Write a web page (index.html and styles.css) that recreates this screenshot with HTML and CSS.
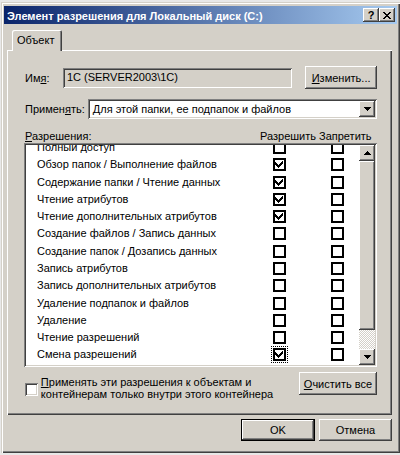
FILE: index.html
```html
<!DOCTYPE html>
<html lang="ru">
<head>
<meta charset="utf-8">
<link rel="stylesheet" href="styles.css">
</head>
<body>
<div class="window">
  <div class="titlebar">
    <span class="title">Элемент разрешения для Локальный диск (C:)</span>
    <div class="tbtns">
      <div class="tbtn raised"><span class="q">?</span></div>
      <div class="tbtn raised">
        <svg width="8" height="7" viewBox="0 0 8 7" shape-rendering="crispEdges"><path d="M0 0h2v1h1v1h2v-1h1v-1h2v1h-1v1h-1v1h-1v1h1v1h1v1h1v1h-2v-1h-1v-1h-2v1h-1v1h-2v-1h1v-1h1v-1h1v-1h-1v-1h-1v-1h-1z" fill="#000"/></svg>
      </div>
    </div>
  </div>
  <div class="client">
    <div class="tabs">
      <div class="tab">Объект</div>
    </div>
    <div class="panel">
      <div class="row-name">
        <span class="lbl lbl-name">Им<u>я</u>:</span>
        <div class="field sunken">1C (SERVER2003\1C)</div>
        <div class="btn raised btn-change"><span><u>И</u>зменить...</span></div>
      </div>
      <div class="row-apply">
        <span class="lbl lbl-apply">Примен<u>я</u>ть:</span>
        <div class="combo sunken">
          <span class="combo-text">Для этой папки, ее подпапок и файлов</span>
          <div class="drop raised">
            <svg width="7" height="4" viewBox="0 0 7 4" shape-rendering="crispEdges"><path d="M0 0h7v1h-1v1h-1v1h-1v1h-1v-1h-1v-1h-1v-1h-1z" fill="#000"/></svg>
          </div>
        </div>
      </div>
      <div class="row-head">
        <span class="lbl"><u>Р</u>азрешения:</span>
        <span class="col-allow">Разрешить</span>
        <span class="col-deny">Запретить</span>
      </div>
      <div class="list sunken">
        <div class="list-rows">
          <div class="rows">
            <div class="prow"><span>Полный доступ</span><i class="cb"></i><i class="cb"></i></div>
            <div class="prow"><span>Обзор папок / Выполнение файлов</span><i class="cb on"></i><i class="cb"></i></div>
            <div class="prow"><span>Содержание папки / Чтение данных</span><i class="cb on"></i><i class="cb"></i></div>
            <div class="prow"><span>Чтение атрибутов</span><i class="cb on"></i><i class="cb"></i></div>
            <div class="prow"><span>Чтение дополнительных атрибутов</span><i class="cb on"></i><i class="cb"></i></div>
            <div class="prow"><span>Создание файлов / Запись данных</span><i class="cb"></i><i class="cb"></i></div>
            <div class="prow"><span>Создание папок / Дозапись данных</span><i class="cb"></i><i class="cb"></i></div>
            <div class="prow"><span>Запись атрибутов</span><i class="cb"></i><i class="cb"></i></div>
            <div class="prow"><span>Запись дополнительных атрибутов</span><i class="cb"></i><i class="cb"></i></div>
            <div class="prow"><span>Удаление подпапок и файлов</span><i class="cb"></i><i class="cb"></i></div>
            <div class="prow"><span>Удаление</span><i class="cb"></i><i class="cb"></i></div>
            <div class="prow"><span>Чтение разрешений</span><i class="cb"></i><i class="cb"></i></div>
            <div class="prow"><span>Смена разрешений</span><i class="cb on focus"></i><i class="cb"></i></div>
          </div>
        </div>
        <div class="scrollbar">
          <div class="sb-btn raised">
            <svg width="7" height="4" viewBox="0 0 7 4" shape-rendering="crispEdges"><path d="M3 0h1v1h1v1h1v1h1v1h-7v-1h1v-1h1v-1h1z" fill="#000"/></svg>
          </div>
          <div class="sb-thumb raised"></div>
          <div class="sb-track"></div>
          <div class="sb-btn raised">
            <svg width="7" height="4" viewBox="0 0 7 4" shape-rendering="crispEdges"><path d="M0 0h7v1h-1v1h-1v1h-1v1h-1v-1h-1v-1h-1v-1h-1z" fill="#000"/></svg>
          </div>
        </div>
      </div>
      <div class="row-bottom">
        <i class="chk sunken"></i>
        <div class="chk-text"><u>П</u>рименять эти разрешения к объектам и<br>контейнерам только внутри этого контейнера</div>
        <div class="btn raised btn-clear"><span><u>О</u>чистить все</span></div>
      </div>
    </div>
    <div class="footer">
      <div class="btn btn-default btn-ok"><span>OK</span></div>
      <div class="btn raised btn-cancel"><span>Отмена</span></div>
    </div>
  </div>
</div>
</body>
</html>
```

FILE: styles.css
```css
* { box-sizing: border-box; }
html, body {
  margin: 0;
  padding: 0;
}
body {
  width: 400px;
  height: 455px;
  overflow: hidden;
  background: #e8e8e8;
  font-family: "Liberation Sans", Arial, sans-serif;
  font-size: 11px;
  color: #000;
}
u { text-decoration: underline; text-underline-offset: 1px; }

.raised {
  background: #d4d0c8;
  box-shadow: inset -1px -1px #404040, inset 1px 1px #fff, inset -2px -2px #808080, inset 2px 2px #d4d0c8;
}
.sunken {
  box-shadow: inset 1px 1px #808080, inset -1px -1px #fff, inset 2px 2px #404040, inset -2px -2px #d4d0c8;
}

.window {
  margin: 2px 0 0 1px;
  width: 399px;
  height: 451px;
  padding: 4px 3px 3px 3px;
  background: #d4d0c8;
  box-shadow: inset 1px 1px #d4d0c8, inset 2px 2px #fff, inset -1px -1px #404040, inset -2px -2px #808080;
  display: flex;
  flex-direction: column;
}

.titlebar {
  height: 18px;
  display: flex;
  align-items: center;
  justify-content: space-between;
  padding: 0 2px 0 3px;
  background: linear-gradient(to right, #0a246a, #a6caf0);
}
.title {
  color: #fff;
  font-weight: bold;
  font-size: 11px;
  white-space: nowrap;
  padding-top: 1px;
}
.tbtns { display: flex; }
.tbtn {
  width: 16px;
  height: 14px;
  display: flex;
  align-items: center;
  justify-content: center;
}
.q {
  font-weight: bold;
  font-size: 11px;
  line-height: 1;
  margin-top: 1px;
}

.client {
  flex: 1;
  display: flex;
  flex-direction: column;
  padding: 6px 5px 0 3px;
}

.tabs {
  display: flex;
  height: 20px;
  padding-left: 5px;
  position: relative;
  z-index: 1;
}
.tab {
  width: 50px;
  height: 21px;
  padding: 4px 0 0 5px;
  background: #d4d0c8;
  border-radius: 2px 2px 0 0;
  box-shadow: inset 1px 1px #fff, inset -1px 0 #404040, inset -2px 0 #808080;
}

.panel {
  height: 365px;
  padding: 16px 15px 0 17px;
  box-shadow: inset 1px 1px #fff, inset -1px -1px #404040, inset -2px -2px #808080;
  display: flex;
  flex-direction: column;
}

.lbl { padding-left: 1px; white-space: nowrap; }

.row-name {
  display: flex;
  align-items: center;
  height: 23px;
}
.lbl-name { width: 39px; }
.field {
  width: 230px;
  height: 20px;
  background: #d4d0c8;
  padding: 3px 0 0 4px;
  white-space: nowrap;
}
.btn {
  height: 23px;
  display: flex;
  align-items: center;
  justify-content: center;
  white-space: nowrap;
}
.btn-change { width: 72px; margin-left: 13px; }

.row-apply {
  display: flex;
  align-items: center;
  margin-top: 10px;
  height: 20px;
}
.lbl-apply { width: 64px; }
.combo {
  width: 290px;
  height: 20px;
  background: #fff;
  display: flex;
  align-items: center;
  padding: 2px;
}
.combo-text { flex: 1; padding-left: 3px; white-space: nowrap; }
.drop {
  width: 16px;
  height: 16px;
  display: flex;
  align-items: center;
  justify-content: center;
}

.row-head {
  display: grid;
  grid-template-columns: 236px 59px auto;
  margin-top: 11px;
  height: 13px;
  line-height: 13px;
}
.col-allow, .col-deny { white-space: nowrap; }

.list {
  height: 224px;
  background: #fff;
  padding: 2px;
  display: flex;
}
.list-rows {
  flex: 1;
  overflow: hidden;
}
.rows { margin-top: -6px; }
.prow {
  height: 17.27px;
  display: grid;
  grid-template-columns: 236px 13px 45px 13px;
  align-items: center;
  padding-left: 11px;
}
.prow span { white-space: nowrap; line-height: 13px; }
.prow .cb + .cb { grid-column: 4; }
.cb {
  display: block;
  width: 13px;
  height: 13px;
  border: 2px solid #000;
  background: #fff;
}
.cb.on {
  background-image: url("data:image/svg+xml;utf8,<svg xmlns='http://www.w3.org/2000/svg' width='9' height='9' viewBox='0 0 9 9' shape-rendering='crispEdges'><path d='M7 1h1v3h-1v1h-1v1h-1v1h-1v1h-1v-1h-1v-1h-1v-1h-1v-3h1v1h1v1h1v1h1v-1h1v-1h1z' fill='black'/></svg>");
  background-repeat: no-repeat;
  background-position: 0 0;
}
.cb.focus { outline: 1px dotted #000; outline-offset: 1px; }

.scrollbar {
  width: 16px;
  display: flex;
  flex-direction: column;
}
.sb-btn {
  height: 16px;
  display: flex;
  align-items: center;
  justify-content: center;
}
.sb-thumb { height: 169px; }
.sb-track {
  flex: 1;
  background: repeating-conic-gradient(#fff 0 25%, #d4d0c8 0 50%) 0 0 / 2px 2px;
}

.row-bottom {
  display: flex;
  margin-top: 4px;
  align-items: flex-start;
}
.chk {
  display: block;
  width: 13px;
  height: 13px;
  background: #fff;
  margin: 12px 0 0 1px;
}
.chk-text {
  width: 261px;
  margin-left: 3px;
  line-height: 12px;
  padding-top: 5px;
  white-space: nowrap;
}
.btn-clear { width: 79px; margin-left: auto; margin-top: 1px; }

.footer {
  display: flex;
  justify-content: flex-end;
  gap: 4px;
  padding-top: 4px;
}
.btn-ok { width: 74px; height: 22px; }
.btn-cancel { width: 73px; height: 22px; }
.btn-default {
  background: #d4d0c8;
  box-shadow: inset 0 0 0 1px #000, inset -2px -2px #404040, inset 2px 2px #fff, inset -3px -3px #808080;
}
```
